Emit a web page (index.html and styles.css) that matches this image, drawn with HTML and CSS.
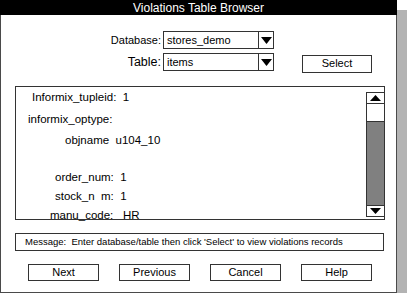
FILE: index.html
```html
<!DOCTYPE html>
<html lang="en">
<head>
    <meta charset="UTF-8">
    <title>Violations Table Browser</title>
    <link rel="stylesheet" href="styles.css">
</head>
<body>
    <div class="window">
        <div class="titlebar">Violations Table Browser</div>

        <div class="pickers">
            <label class="field-label">Database:</label>
            <div class="combo">
                <span class="combo-value">stores_demo</span>
                <span class="combo-arrow">
                    <svg width="11" height="7" viewBox="0 0 11 7"><polygon points="0,0 11,0 5.5,7" fill="#000"/></svg>
                </span>
            </div>
            <span></span>

            <label class="field-label field-label-big">Table:</label>
            <div class="combo">
                <span class="combo-value">items</span>
                <span class="combo-arrow">
                    <svg width="11" height="7" viewBox="0 0 11 7"><polygon points="0,0 11,0 5.5,7" fill="#000"/></svg>
                </span>
            </div>
            <button class="btn btn-select">Select</button>
        </div>

        <div class="records">
            <div class="record-list">
                <div class="rec indent-tuple">Informix_tupleid:  1</div>
                <div class="rec indent-optype gap-wide">informix_optype:</div>
                <div class="rec indent-obj gap-small">objname  u104_10</div>
                <div class="rec indent-order gap-blank">order_num:  1</div>
                <div class="rec indent-order">stock_n  m:  1</div>
                <div class="rec indent-manu">manu_code:   HR</div>
            </div>
            <div class="scrollbar">
                <div class="scroll-btn">
                    <svg width="11" height="6" viewBox="0 0 11 6"><polygon points="0,6 11,6 5.5,0" fill="#000"/></svg>
                </div>
                <div class="scroll-track"></div>
                <div class="scroll-thumb"></div>
                <div class="scroll-btn scroll-btn-down">
                    <svg width="11" height="6" viewBox="0 0 11 6"><polygon points="0,0 11,0 5.5,6" fill="#000"/></svg>
                </div>
            </div>
        </div>

        <div class="message">Message:  Enter database/table then click 'Select' to view violations records</div>

        <div class="actions">
            <button class="btn">Next</button>
            <button class="btn">Previous</button>
            <button class="btn">Cancel</button>
            <button class="btn">Help</button>
        </div>
    </div>
</body>
</html>
```

FILE: styles.css
```css
body {
    margin: 0;
    background: #ffffff;
    font-family: "Liberation Sans", Arial, sans-serif;
    color: #000;
}
.window {
    width: 395px;
    height: 291px;
    border: 1px solid #4a4a4a;
    background: #ffffff;
    box-shadow: 10px 10px 0 #b3b3b3;
}
.titlebar {
    height: 15px;
    margin: -1px -1px 0 -1px;
    background: #000;
    color: #fff;
    font-size: 12px;
    line-height: 16px;
    text-align: center;
}
.pickers {
    display: grid;
    grid-template-columns: 162px 111px 98px;
    grid-auto-rows: 18px;
    row-gap: 4px;
    margin-top: 16px;
    align-items: center;
}
.field-label {
    font-size: 11px;
    text-align: right;
    padding-right: 2px;
}
.field-label-big {
    font-size: 12.5px;
}
.combo {
    display: flex;
    height: 18px;
    box-sizing: border-box;
    border: 1px solid #333;
}
.combo-value {
    flex: 1;
    font-size: 11px;
    line-height: 16px;
    padding-left: 3px;
}
.combo-arrow {
    width: 14px;
    border-left: 1px solid #333;
    display: flex;
    align-items: center;
    justify-content: center;
}
.btn {
    width: 71px;
    height: 17px;
    box-sizing: border-box;
    border: 1px solid #333;
    background: #fff;
    font-family: "Liberation Sans", Arial, sans-serif;
    font-size: 11px;
    padding: 0;
    line-height: 15px;
}
.btn-select {
    justify-self: end;
    margin-top: 3px;
    width: 70px;
    height: 18px;
}
.records {
    display: flex;
    width: 370px;
    height: 134px;
    box-sizing: border-box;
    margin: 15px 0 0 14px;
    border: 1px solid #333;
}
.record-list {
    flex: 1;
    padding-top: 1px;
    font-size: 11.5px;
    line-height: 19px;
}
.rec {
    white-space: pre;
    height: 19px;
}
.gap-wide { margin-top: 3px; }
.gap-small { margin-top: 2px; }
.gap-blank { margin-top: 18px; }
.indent-tuple { padding-left: 16px; }
.indent-optype { padding-left: 12px; }
.indent-obj { padding-left: 49px; }
.indent-order { padding-left: 39px; }
.indent-manu { padding-left: 34px; }
.scrollbar {
    width: 17px;
    margin: 5px 0 2px 0;
    border: 1px solid #333;
    border-right: none;
    display: flex;
    flex-direction: column;
}
.scroll-btn {
    height: 10px;
    display: flex;
    align-items: center;
    justify-content: center;
    border-bottom: 1px solid #333;
}
.scroll-btn-down {
    border-bottom: none;
    border-top: 1px solid #333;
}
.scroll-track {
    height: 17px;
    border-bottom: 1px solid #333;
}
.scroll-thumb {
    flex: 1;
    background: #808080;
}
.message {
    width: 369px;
    height: 18px;
    box-sizing: border-box;
    margin: 13px 0 0 14px;
    border: 1px solid #333;
    padding-left: 9px;
    font-size: 9.5px;
    line-height: 16px;
    white-space: pre;
}
.actions {
    display: flex;
    gap: 20px;
    margin: 13px 0 0 27px;
}
```
